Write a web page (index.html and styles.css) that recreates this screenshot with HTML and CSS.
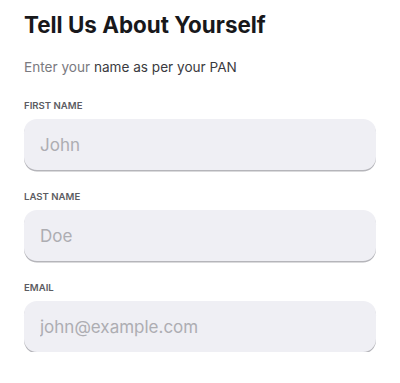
FILE: index.html
```html
<!DOCTYPE html>
<html>
<head>
<meta charset="utf-8">
<link rel="stylesheet" href="styles.css">
</head>
<body>
<main class="form">
  <h1 class="title">Tell Us About Yourself</h1>
  <p class="subtitle"><span class="muted">Enter your</span> name as per your PAN</p>
  <div class="fields">
    <label class="field">
      <span class="label">FIRST NAME</span>
      <input class="input" type="text" placeholder="John">
    </label>
    <label class="field">
      <span class="label">LAST NAME</span>
      <input class="input" type="text" placeholder="Doe">
    </label>
    <label class="field">
      <span class="label">EMAIL</span>
      <input class="input" type="email" placeholder="john@example.com">
    </label>
  </div>
</main>
</body>
</html>
```

FILE: styles.css
```css
* { box-sizing: border-box; }
html, body { margin: 0; background: #ffffff; }
body {
  font-family: Inter, "Noto Sans", "Liberation Sans", sans-serif;
  color: #1b1b1f;
}
.form {
  padding: 11px 24px 0 24px;
  display: flex;
  flex-direction: column;
}
.title {
  margin: 0;
  font-size: 22.4px;
  line-height: 28px;
  font-weight: 700;
  color: #18181b;
}
.subtitle {
  margin: 18px 0 0 0;
  font-size: 13.6px;
  line-height: 20px;
  color: #3a3a40;
}
.muted { color: #7a7a80; }
.fields {
  margin-top: 22px;
  display: flex;
  flex-direction: column;
  gap: 20px;
}
.field {
  display: flex;
  flex-direction: column;
  gap: 6px;
}
.label {
  font-size: 9.6px;
  line-height: 14px;
  font-weight: 600;
  color: #5c5c62;
}
.input {
  height: 51px;
  width: 100%;
  border: none;
  border-radius: 13px;
  background: #efeff4;
  box-shadow: 0 1.5px 0 #b5b5ba;
  padding: 0 16px;
  font-family: Inter, "Noto Sans", sans-serif;
  font-size: 17px;
  color: #1b1b1f;
  outline: none;
}
.input::placeholder { color: #adadb2; }
```
